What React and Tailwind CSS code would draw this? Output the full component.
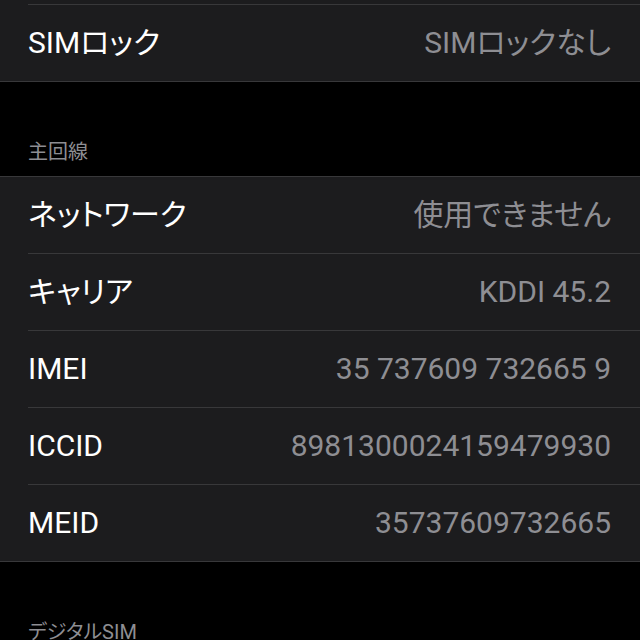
import React from "react";

const font = "font-['Roboto','Noto_Sans_CJK_JP',sans-serif] [font-feature-settings:'palt']";

function Row({ label, value, first }) {
  return (
    <div className={`ml-[28px] ${first ? "" : "border-t border-[#38383a]"}`}>
      <div className="h-[76px] flex items-center justify-between pr-[29px]">
        <span className="text-white text-[30px] leading-none">{label}</span>
        <span className="text-[#8e8e93] text-[30px] leading-none">{value}</span>
      </div>
    </div>
  );
}

function Header({ children }) {
  return (
    <div className="h-[94px] flex items-end px-[28px] pb-[12px]">
      <span className="text-[#8e8e93] text-[20px] leading-[24px]">{children}</span>
    </div>
  );
}

export default function App() {
  return (
    <div className={`w-[640px] h-[640px] overflow-hidden bg-black ${font}`}>
      <div className="bg-[#1c1c1e] border-b border-[#38383a]">
        <div className="h-[4px]" />
        <div className="ml-[28px] border-t border-[#38383a]">
          <div className="h-[76px] flex items-center justify-between pr-[29px]">
            <span className="text-white text-[30px] leading-none">SIMロック</span>
            <span className="text-[#8e8e93] text-[30px] leading-none">SIMロックなし</span>
          </div>
        </div>
      </div>
      <Header>主回線</Header>
      <div className="bg-[#1c1c1e] border-t border-b border-[#38383a]">
        <Row first label="ネットワーク" value="使用できません" />
        <Row label="キャリア" value="KDDI 45.2" />
        <Row label="IMEI" value="35 737609 732665 9" />
        <Row label="ICCID" value="8981300024159479930" />
        <Row label="MEID" value="35737609732665" />
      </div>
      <Header>デジタルSIM</Header>
    </div>
  );
}
